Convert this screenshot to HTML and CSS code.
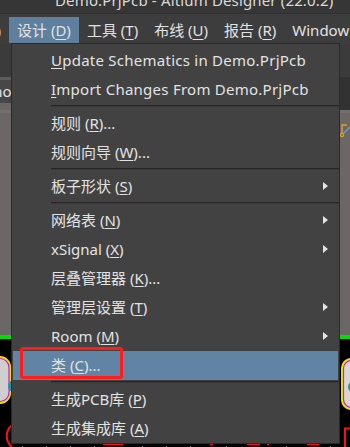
FILE: index.html
```html
<!DOCTYPE html>
<html lang="zh-CN">
<head>
  <meta charset="UTF-8" />
  <meta name="viewport" content="width=device-width, initial-scale=1.0" />
  <title>Altium Designer - 设计</title>
  <link rel="stylesheet" href="styles.css">
</head>
<body>
  <div class="titlebar">
    <span class="title-text">Demo.PrjPcb - Altium Designer (22.0.2)</span>
  </div>

  <nav class="menubar">
    <span class="menu-item first">放置 (<u>P</u>)</span>
    <span class="menu-item open">设计 (<u>D</u>)</span>
    <span class="menu-item">工具 (<u>T</u>)</span>
    <span class="menu-item">布线 (<u>U</u>)</span>
    <span class="menu-item">报告 (<u>R</u>)</span>
    <span class="menu-item">Window (<u>W</u>)</span>
  </nav>

  <div class="workspace">
    <div class="toolbar-band"></div>
    <div class="tab-band">
      <span class="doc-tab">Demo.PcbDoc</span>
    </div>
    <div class="sheet">
      <svg class="tool-icon" width="10" height="16" viewBox="0 0 10 16">
        <path d="M2 11 V3 H7" fill="none" stroke="#e0a020" stroke-width="1.4" />
        <circle cx="2" cy="13" r="1.6" fill="none" stroke="#e0a020" stroke-width="1.2" />
        <path d="M3.5 11.5 L10 5" stroke="#6a9ad0" stroke-width="1.4" />
      </svg>
    </div>
    <div class="board-edge"></div>
    <svg class="pcb" width="350" height="108" viewBox="0 0 350 108">
      <rect x="-32" y="18" width="42" height="46" rx="10" fill="#cfcfcf" stroke="#f0e000" stroke-width="2" />
      <rect x="-31" y="19.5" width="40" height="43" rx="9" fill="none" stroke="#c020c0" stroke-width="1.2" />
      <circle cx="14" cy="47" r="6" fill="#1a9a9a" />
      <rect x="342" y="20" width="44" height="50" rx="9" fill="#d6d6d6" stroke="#f0e000" stroke-width="2" />
      <rect x="343.5" y="21.5" width="42" height="47" rx="8" fill="none" stroke="#c020c0" stroke-width="1.2" />
      <circle cx="354" cy="48" r="6" fill="#1a9a9a" />
      <path d="M345 108 V89.5 H350" fill="none" stroke="#ff1010" stroke-width="2" />
      <path d="M12 86 C5 92 5 102 12 108" fill="none" stroke="#ff1010" stroke-width="2" />
      <g fill="#ff1010">
        <rect x="103" y="104" width="20" height="2" />
        <rect x="210" y="104" width="3" height="2" />
        <rect x="247" y="104" width="13" height="2" />
        <rect x="267" y="104" width="2" height="2" />
        <rect x="307" y="104" width="12" height="2" />
      </g>
      <g fill="#8a8a8a">
        <rect x="22" y="107" width="1" height="1" />
        <rect x="46" y="107" width="1" height="1" />
        <rect x="70" y="107" width="1" height="1" />
        <rect x="94" y="107" width="1" height="1" />
        <rect x="142" y="107" width="1" height="1" />
        <rect x="166" y="107" width="1" height="1" />
        <rect x="190" y="107" width="1" height="1" />
        <rect x="226" y="107" width="1" height="1" />
        <rect x="286" y="107" width="1" height="1" />
        <rect x="330" y="107" width="1" height="1" />
      </g>
    </svg>
  </div>

  <div class="dropdown">
    <div class="menu-row latin"><u>U</u>pdate Schematics in Demo.PrjPcb</div>
    <div class="menu-row latin"><u>I</u>mport Changes From Demo.PrjPcb</div>
    <div class="menu-sep"></div>
    <div class="menu-row">规则 (<u>R</u>)...</div>
    <div class="menu-row">规则向导 (<u>W</u>)...</div>
    <div class="menu-sep"></div>
    <div class="menu-row sub">板子形状 (<u>S</u>)</div>
    <div class="menu-sep"></div>
    <div class="menu-row sub">网络表 (<u>N</u>)</div>
    <div class="menu-row sub">xSignal (<u>X</u>)</div>
    <div class="menu-row">层叠管理器 (<u>K</u>)...</div>
    <div class="menu-row sub">管理层设置 (<u>T</u>)</div>
    <div class="menu-row sub">Room (<u>M</u>)</div>
    <div class="menu-row active">类 (<u>C</u>)...<span class="mark"></span></div>
    <div class="menu-sep"></div>
    <div class="menu-row">生成PCB库 (<u>P</u>)</div>
    <div class="menu-row">生成集成库 (<u>A</u>)</div>
  </div>
</body>
</html>
```

FILE: styles.css
```css
body {
  margin: 0;
  width: 350px;
  height: 447px;
  overflow: hidden;
  position: relative;
  background: #000;
  font-family: "Noto Sans", "Noto Sans CJK SC", sans-serif;
  font-size: 15px;
  color: #e2e2e2;
}

u {
  text-decoration: underline;
  text-underline-offset: 2px;
  text-decoration-thickness: 1px;
}

.titlebar {
  height: 13px;
  overflow: hidden;
  background: #363636;
  border-bottom: 1px solid #303030;
  padding-left: 55px;
}

.title-text {
  display: block;
  margin-top: -8px;
  line-height: 16px;
  white-space: nowrap;
  letter-spacing: 0.15px;
  color: #dadada;
}

.menubar {
  display: flex;
  height: 30px;
  box-sizing: border-box;
  padding-top: 3px;
  background: #3d3d3d;
  white-space: nowrap;
}

.menu-item {
  height: 26px;
  line-height: 26px;
  padding: 0 8px;
  flex: none;
}

.menu-item.first {
  margin-left: -59px;
}

.menu-item.open {
  background: #5f7f9f;
}

.menu-item u {
  text-underline-offset: 3px;
}

.workspace {
  display: flex;
  flex-direction: column;
}

.toolbar-band {
  height: 33px;
  background: #3b3b3b;
}

.tab-band {
  height: 33px;
  background: #323232;
  overflow: hidden;
}

.doc-tab {
  display: block;
  width: 60px;
  height: 33px;
  box-sizing: border-box;
  border-top: 3px solid #5c5c5c;
  margin-left: -31px;
  line-height: 23px;
  white-space: nowrap;
  background: linear-gradient(#474747 0 23px, #6b6767 23px);
}

.sheet {
  height: 225px;
  box-sizing: border-box;
  border-top: 3px solid #727070;
  background: #6b6767;
  display: flex;
  justify-content: flex-end;
  padding-top: 9px;
}

.board-edge {
  height: 4px;
  background: #00e000;
}

.pcb {
  display: block;
}

.dropdown {
  position: absolute;
  left: 11px;
  top: 43px;
  width: 329px;
  height: 401px;
  box-sizing: border-box;
  border: 1px solid #2a2a2a;
  padding-top: 2px;
  background: #424242;
}

.menu-row {
  position: relative;
  height: 29px;
  line-height: 29px;
  margin: 0 1px;
  padding-left: 38px;
  white-space: nowrap;
}

.menu-row.latin {
  letter-spacing: 0.25px;
}

.menu-row.sub::after {
  content: "";
  position: absolute;
  right: 10px;
  top: 10px;
  border-left: 5px solid #e4e4e4;
  border-top: 4.5px solid transparent;
  border-bottom: 4.5px solid transparent;
}

.menu-row.active {
  background: #6284a4;
}

.mark {
  position: absolute;
  left: 7px;
  top: -4px;
  width: 103px;
  height: 32px;
  box-sizing: border-box;
  border: 3px solid #ff1c1c;
  border-radius: 3px;
}

.menu-sep {
  height: 1px;
  margin: 1px 0 2px 39px;
  background: #262626;
  border-bottom: 1px solid #3a3a3a;
}
```
